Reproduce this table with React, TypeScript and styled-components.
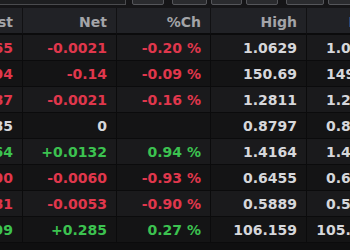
import React from "react";
import styled, { createGlobalStyle } from "styled-components";

const GlobalStyle = createGlobalStyle`
	html, body {
		margin: 0;
		padding: 0;
		background: #0f0f10;
	}
	body {
		font-family: "DejaVu Sans", Verdana, sans-serif;
	}
`;

const Screen = styled.div`
	width: 350px;
	height: 250px;
	overflow: hidden;
	background: #0f0f10;
	display: flex;
	flex-direction: column;
`;

const Toolbar = styled.div`
	height: 8px;
	flex: none;
	display: flex;
	align-items: flex-end;
	gap: 4px;
	overflow: hidden;
	background: #151517;
	padding-bottom: 3px;
	box-sizing: border-box;
`;

const SearchBox = styled.div`
	width: 126px;
	height: 20px;
	flex: none;
	box-sizing: border-box;
	border: 1px solid #4a4b4e;
	border-left: none;
	background: #1d1e20;
`;

const ToolButton = styled.div<{ $w: number; $gap?: number }>`
	width: ${(p) => p.$w}px;
	height: 20px;
	flex: none;
	margin-left: ${(p) => p.$gap ?? 0}px;
	box-sizing: border-box;
	border: 1px solid #55565a;
	border-radius: 2px;
	background: #2a2b2e;
`;

const Scroller = styled.div`
	flex: 1;
	overflow: hidden;
`;

const Table = styled.div`
	margin-left: -70px;
	display: grid;
	grid-template-columns: 93px 94px 94px 96px 83px;
	width: max-content;
`;

const HeadCell = styled.div`
	height: 27px;
	box-sizing: border-box;
	background: #212226;
	border-right: 1px solid #111113;
	border-bottom: 2px solid #0b0b0c;
	display: flex;
	align-items: center;
	justify-content: flex-end;
	padding: 2px 9px 0 0;
	color: #a3a4a8;
	font-size: 14px;
	font-weight: bold;
	white-space: nowrap;
`;

const Cell = styled.div<{ $tone: "up" | "down" | "flat"; $odd: boolean }>`
	height: 26px;
	box-sizing: border-box;
	background: ${(p) => (p.$odd ? "#1a1a1c" : "#141415")};
	border-right: 1px solid #0b0b0c;
	border-bottom: 1px solid #0b0b0c;
	display: flex;
	align-items: center;
	justify-content: flex-end;
	padding: 1px 9px 0 0;
	font-size: 14px;
	font-weight: bold;
	white-space: nowrap;
	color: ${(p) =>
		p.$tone === "up" ? "#3cc250" : p.$tone === "down" ? "#e0374c" : "#d6d7db"};
`;

type Row = {
	last: string;
	net: string;
	pct: string;
	high: string;
	low: string;
};

const rows: Row[] = [
	{ last: "1.0565", net: "-0.0021", pct: "-0.20 %", high: "1.0629", low: "1.0561" },
	{ last: "150.94", net: "-0.14", pct: "-0.09 %", high: "150.69", low: "149.83" },
	{ last: "1.2787", net: "-0.0021", pct: "-0.16 %", high: "1.2811", low: "1.2772" },
	{ last: "0.8785", net: "0", pct: "", high: "0.8797", low: "0.8779" },
	{ last: "1.4164", net: "+0.0132", pct: "0.94 %", high: "1.4164", low: "1.4026" },
	{ last: "0.6390", net: "-0.0060", pct: "-0.93 %", high: "0.6455", low: "0.6384" },
	{ last: "0.5881", net: "-0.0053", pct: "-0.90 %", high: "0.5889", low: "0.5873" },
	{ last: "105.999", net: "+0.285", pct: "0.27 %", high: "106.159", low: "105.512" },
];

function toneOf(net: string): "up" | "down" | "flat" {
	if (net.startsWith("+")) return "up";
	if (net.startsWith("-")) return "down";
	return "flat";
}

export default function App() {
	return (
		<Screen>
			<GlobalStyle />
			<Toolbar>
				<SearchBox />
				<ToolButton $w={32} $gap={2} />
				<ToolButton $w={35} $gap={4} />
				<ToolButton $w={31} />
				<ToolButton $w={32} />
				<ToolButton $w={38} $gap={4} />
				<ToolButton $w={40} />
			</Toolbar>
			<Scroller>
				<Table>
					<HeadCell>Last</HeadCell>
					<HeadCell>Net</HeadCell>
					<HeadCell>%Ch</HeadCell>
					<HeadCell>High</HeadCell>
					<HeadCell>Low</HeadCell>
					{rows.map((r, i) => {
						const tone = toneOf(r.net);
						const odd = i % 2 === 0;
						return (
							<React.Fragment key={i}>
								<Cell $tone={tone} $odd={odd}>{r.last}</Cell>
								<Cell $tone={tone} $odd={odd}>{r.net}</Cell>
								<Cell $tone={tone} $odd={odd}>{r.pct}</Cell>
								<Cell $tone="flat" $odd={odd}>{r.high}</Cell>
								<Cell $tone="flat" $odd={odd}>{r.low}</Cell>
							</React.Fragment>
						);
					})}
				</Table>
			</Scroller>
		</Screen>
	);
}
